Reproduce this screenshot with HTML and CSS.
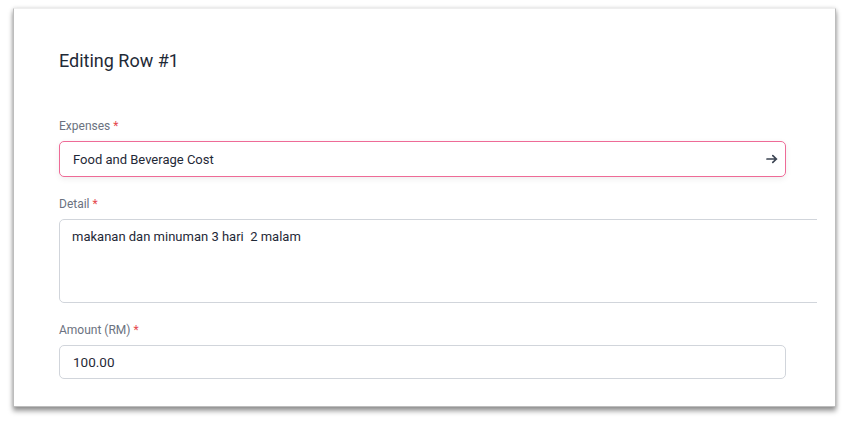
FILE: index.html
```html
<!DOCTYPE html>
<html lang="en">

<head>
    <meta charset="UTF-8">
    <meta name="viewport" content="width=device-width, initial-scale=1.0">
    <title>Editing Row #1</title>
    <link rel="stylesheet" href="styles.css">
</head>

<body>
    <div class="card">
        <h2 class="card-title">Editing Row #1</h2>

        <div class="field">
            <label class="field-label">Expenses <span class="req">*</span></label>
            <div class="select-box">
                <span class="select-value">Food and Beverage Cost</span>
                <svg class="select-arrow" width="12" height="10" viewBox="0 0 12 10">
                    <path d="M1 5h9.5M6.8 1.6L10.4 5L6.8 8.4" fill="none" stroke="#3b4452" stroke-width="1.7"
                        stroke-linecap="round" stroke-linejoin="round" />
                </svg>
            </div>
        </div>

        <div class="field">
            <label class="field-label">Detail <span class="req">*</span></label>
            <div class="textarea-wrap">
                <div class="textarea-box">makanan dan minuman 3 hari&nbsp; 2 malam</div>
            </div>
        </div>

        <div class="field">
            <label class="field-label">Amount (RM) <span class="req">*</span></label>
            <div class="input-box">100.00</div>
        </div>
    </div>
</body>

</html>
```

FILE: styles.css
```css
:root {
    --text-color: #1f2937;
    --label-color: #6b7280;
    --required-color: #e5484d;
    --border-color: #d1d5db;
    --focus-color: #ee6b97;
}

* {
    margin: 0;
    padding: 0;
    box-sizing: border-box;
}

html,
body {
    background: #ffffff;
}

body {
    font-family: Roboto, 'Noto Sans', sans-serif;
    color: var(--text-color);
    min-height: 426px;
    padding: 8px 15px 19px 13px;
}

.card {
    background: #ffffff;
    height: 399px;
    padding: 40px 49px 0 45px;
    border: 1px solid #bdbdbd;
    border-top-color: #eeeeee;
    box-shadow: 0 4px 5px rgba(0, 0, 0, 0.4), 0 0 4px rgba(0, 0, 0, 0.15);
}

.card-title {
    font-size: 18px;
    line-height: 24px;
    font-weight: 400;
    color: #1f2a37;
    margin-bottom: 45px;
}

.field {
    margin-bottom: 19px;
}

.field-label {
    display: block;
    font-size: 12px;
    line-height: 16px;
    color: var(--label-color);
    margin-bottom: 7px;
}

.req {
    color: var(--required-color);
}

.select-box {
    display: flex;
    align-items: center;
    justify-content: space-between;
    height: 36px;
    padding: 0 7px 0 13px;
    border: 1px solid var(--focus-color);
    border-radius: 5px;
    box-shadow: 0 2px 6px rgba(0, 0, 0, 0.07);
    font-size: 13px;
}

.textarea-wrap {
    margin-right: -31px;
    overflow: hidden;
}

.textarea-box {
    width: calc(100% + 20px);
    height: 84px;
    padding: 7px 12px;
    border: 1px solid var(--border-color);
    border-radius: 5px;
    font-size: 13px;
    line-height: 20px;
}

.input-box {
    display: flex;
    align-items: center;
    height: 34px;
    padding: 0 13px;
    border: 1px solid var(--border-color);
    border-radius: 5px;
    font-size: 13.5px;
}
```
